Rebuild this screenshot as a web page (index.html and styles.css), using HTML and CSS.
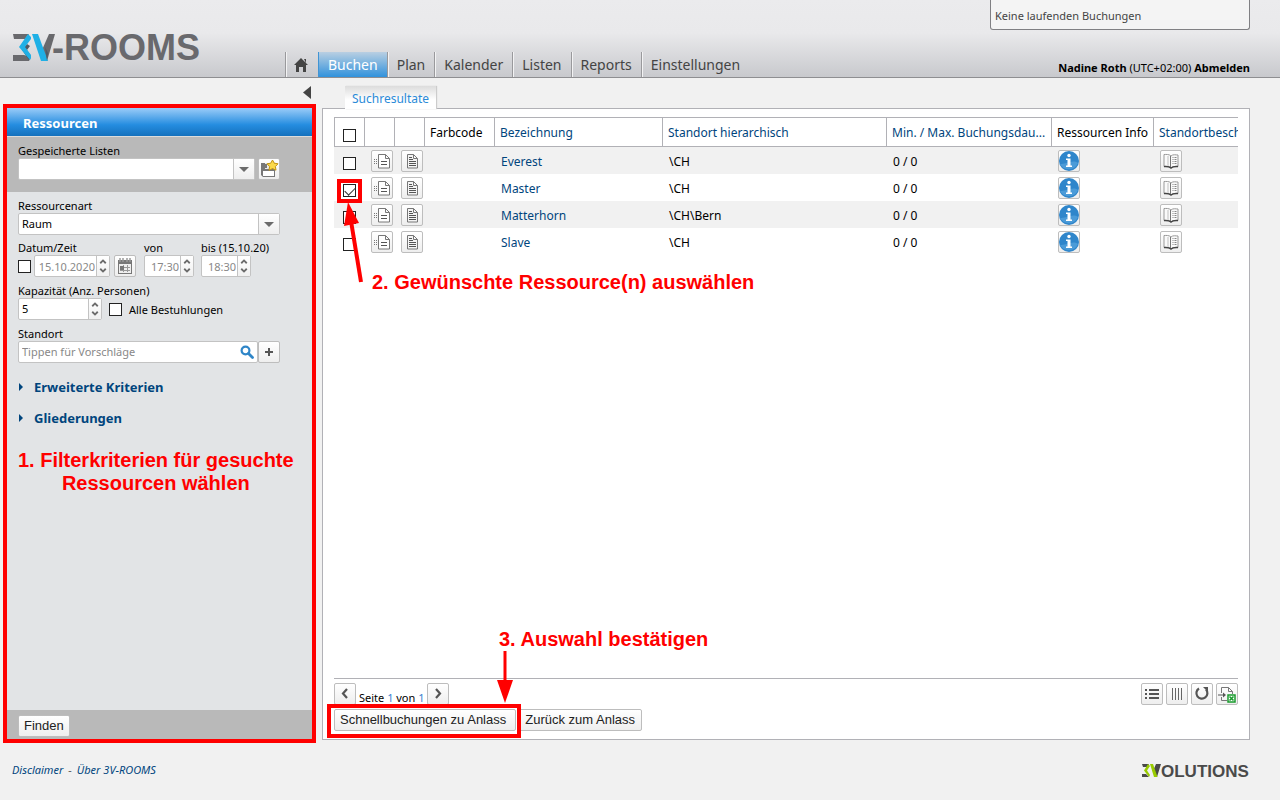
FILE: index.html
```html
<!DOCTYPE html>
<html lang="de">
<head>
<meta charset="utf-8">
<title>3V-ROOMS</title>
<link rel="stylesheet" href="styles.css">
</head>
<body>
<svg class="defs" aria-hidden="true">
  <symbol id="i-card" viewBox="0 0 20 20"><path d="M6.500 3.500h7l4 4v9.500h-11zM13.500 3.500v4h4" fill="#fff" stroke="#777"/><path d="M9 10.500h6M9 13.500h6" stroke="#555"/><path d="M2 8.500h1M4 8.500h1M2 10.500h1M4 10.500h1M2 12.500h1M4 12.500h1" stroke="#777"/></symbol>
  <symbol id="i-doc" viewBox="0 0 20 20"><path d="M5.500 3.500h6l4 4v9.500h-10zM11.500 3.500v4h4" fill="#f4f4f4" stroke="#777"/><path d="M7 6.500h3M7 8.500h4M7 10.500h7M7 12.500h7M7 14.500h7" stroke="#555"/></symbol>
  <symbol id="i-info" viewBox="1 1 20 20"><circle cx="11" cy="11" r="10" fill="#2f86cb"/><path d="M2 14a10 10 0 0 0 18-1C14 9 8 15 2 14z" fill="#4b9bd8"/><circle cx="11" cy="5.500" r="1.700" fill="#fff"/><path d="M8 8.500h4.500v7H14V17H8v-1.500h1.500V10H8z" fill="#fff"/></symbol>
  <symbol id="i-book" viewBox="0 0 20 20"><path d="M10 5c-2-2-5-1.500-7-1.500v12c2 0 5-.5 7 1.500 2-2 5-1.500 7-1.500V4c-2 0-5-1-7 1z" fill="#fafafa" stroke="#999"/><path d="M3 15.500c2 0 5-.5 7 1.500 2-2 5-1.500 7-1.500" fill="none" stroke="#444" stroke-width="1.500"/><path d="M9.500 5v11" stroke="#777"/><path d="M7 5v10" stroke="#ddd" stroke-width="2"/><path d="M11.500 6.500h1M13.500 6.500h2M11.500 8.500h1M13.500 8.500h2M11.500 10.500h1M13.500 10.500h2M11.500 12.500h1M13.500 12.500h2" stroke="#888"/></symbol>
  <symbol id="i-spin" viewBox="0 0 13 20"><path d="M3.500 7L6.500 4l3 3M3.500 13l3 3 3-3" fill="none" stroke="#6b6b6b" stroke-width="2"/></symbol>
</svg>

<header class="top">
  <a class="logo" href="#" aria-label="3V-ROOMS">
    <svg width="195" height="40" viewBox="0 0 195 40">
      <path d="M1 4h16l-4 5H2zM1 25h11l7 2-2 4H1z" fill="#69696d"/>
      <path d="M10 20l5-6 3 2-3 4 4 6-2 4z" fill="#4d5a66"/>
      <path d="M37 4h6l-8 27h-2l-3-11z" fill="#69696d"/>
      <path d="M16 4l3 3v2l-6 8 6 8v3l-1 2L7 17z" fill="#1fb0e6"/>
      <path d="M20 4h6l10 27h-7z" fill="#1fb0e6"/>
      <path d="M33 17l3 6-1 8z" fill="#4d5a66"/>
      <text x="40" y="30" class="logo-text">-ROOMS</text>
    </svg>
  </a>
  <nav class="nav">
    <a href="#" class="home" aria-label="Start"><svg width="14" height="14" viewBox="0 0 14 14"><path d="M7 0l7 7h-2v7H9V9H5v5H2V7H0zM10 1h2v4z" fill="#444"/></svg></a>
    <a href="#" class="active">Buchen</a>
    <a href="#">Plan</a>
    <a href="#">Kalender</a>
    <a href="#">Listen</a>
    <a href="#">Reports</a>
    <a href="#">Einstellungen</a>
  </nav>
  <div class="account">
    <div class="bookings">Keine laufenden Buchungen</div>
    <div class="user"><b>Nadine Roth</b> (UTC+02:00) <a href="#">Abmelden</a></div>
  </div>
</header>

<main class="main">
  <aside class="side">
    <button class="collapse" aria-label="Einklappen"><svg width="8" height="13" viewBox="0 0 8 13"><path d="M8 0v13L0 6.500z" fill="#444"/></svg></button>
    <form class="filter" onsubmit="return false">
      <h2>Ressourcen</h2>
      <div class="saved">
        <label for="lists">Gespeicherte Listen</label>
        <div class="row">
          <span class="combo"><select id="lists"><option></option></select><i></i></span>
          <button class="btn icon" aria-label="Liste speichern"><svg width="20" height="20" viewBox="0 0 20 20"><path d="M2 4h14v14H4l-2-2z" fill="#777"/><path d="M6 4h7v6H6z" fill="#e8e8e8"/><path d="M4 12h11v5H4z" fill="#fff"/><path d="M7 5v4" stroke="#777" stroke-width="2"/><path d="M13.500 1l1.800 3.200 3.700.6-2.600 2.700.6 3.700-3.500-1.600-3.500 1.600.6-3.700L8 4.800l3.700-.6z" fill="#fbd94a" stroke="#c39411"/></svg></button>
        </div>
      </div>
      <div class="fields">
        <div>
          <label for="kind">Ressourcenart</label>
          <div class="row"><span class="combo"><select id="kind"><option>Raum</option></select><i></i></span></div>
        </div>
        <div class="row when">
          <div class="date">
            <label for="date">Datum/Zeit</label>
            <div class="row">
              <input type="checkbox" aria-label="Datum aktiv">
              <span class="spin dim"><input id="date" type="text" value="15.10.2020"><button aria-label="Datum ändern"><svg><use href="#i-spin"/></svg></button></span>
              <button class="btn icon cal" aria-label="Kalender"><svg width="20" height="20" viewBox="0 0 20 20"><path d="M3 4h14v14H3z" fill="#777"/><path d="M4 8h12v9H4z" fill="#eee"/><path d="M5 2v4M8 2v4M12 2v4M15 2v4" stroke="#999" stroke-width="1.500"/><path d="M5 11.500h10M5 14.500h10M8.500 9v7M12.500 9v7" stroke="#999"/><path d="M5 10h4v4H5z" fill="#777"/></svg></button>
            </div>
          </div>
          <div class="from">
            <label for="von">von</label>
            <span class="spin dim"><input id="von" type="text" value="17:30"><button aria-label="von ändern"><svg><use href="#i-spin"/></svg></button></span>
          </div>
          <div class="to">
            <label for="bis">bis (15.10.20)</label>
            <span class="spin dim"><input id="bis" type="text" value="18:30"><button aria-label="bis ändern"><svg><use href="#i-spin"/></svg></button></span>
          </div>
        </div>
        <div>
          <label for="cap">Kapazität (Anz. Personen)</label>
          <div class="row">
            <span class="spin cap"><input id="cap" type="text" value="5"><button aria-label="Kapazität ändern"><svg><use href="#i-spin"/></svg></button></span>
            <input class="all" id="all" type="checkbox"><label for="all">Alle Bestuhlungen</label>
          </div>
        </div>
        <div>
          <label for="loc">Standort</label>
          <div class="row loc">
            <span class="search"><input id="loc" type="text" placeholder="Tippen für Vorschläge"><svg width="14" height="14" viewBox="0 0 14 14"><circle cx="5.500" cy="5.500" r="3.900" fill="#fff" stroke="#2f86c8" stroke-width="2.200"/><path d="M8.500 8.500l4 4" stroke="#2f86c8" stroke-width="2.800" stroke-linecap="round"/></svg></span>
            <button class="btn icon" aria-label="Standort hinzufügen"><svg width="20" height="20" viewBox="0 0 20 20"><path d="M10 6v8M6 10h8" stroke="#555" stroke-width="2"/></svg></button>
          </div>
        </div>
        <a class="more" href="#">Erweiterte Kriterien</a>
        <a class="more" href="#">Gliederungen</a>
        <p class="note">1. Filterkriterien für gesuchte<br>Ressourcen wählen</p>
      </div>
      <div class="submit"><button class="btn">Finden</button></div>
    </form>
  </aside>

  <section class="content">
    <div class="tabs"><a href="#">Suchresultate</a></div>
    <div class="panel">
      <div class="results">
        <table>
          <colgroup><col class="c-icon"><col class="c-icon"><col class="c-icon"><col class="c-color"><col class="c-name"><col class="c-loc"><col class="c-dur"><col class="c-info"><col class="c-desc"></colgroup>
          <thead><tr>
            <th><input type="checkbox" aria-label="Alle"></th><th></th><th></th><th>Farbcode</th>
            <th><a href="#">Bezeichnung</a></th><th><a href="#">Standort hierarchisch</a></th><th><a href="#">Min. / Max. Buchungsdau...</a></th><th>Ressourcen Info</th><th><a href="#">Standortbesch</a></th>
          </tr></thead>
          <tbody>
            <tr><td><input type="checkbox" aria-label="Everest"></td><td><button class="btn icon" aria-label="Karte"><svg><use href="#i-card"/></svg></button></td><td><button class="btn icon" aria-label="Details"><svg><use href="#i-doc"/></svg></button></td><td></td><td><a href="#">Everest</a></td><td>\CH</td><td>0 / 0</td><td><button class="btn icon" aria-label="Info"><svg><use href="#i-info"/></svg></button></td><td><button class="btn icon" aria-label="Beschreibung"><svg><use href="#i-book"/></svg></button></td></tr>
            <tr><td><input type="checkbox" aria-label="Master" checked></td><td><button class="btn icon" aria-label="Karte"><svg><use href="#i-card"/></svg></button></td><td><button class="btn icon" aria-label="Details"><svg><use href="#i-doc"/></svg></button></td><td></td><td><a href="#">Master</a></td><td>\CH</td><td>0 / 0</td><td><button class="btn icon" aria-label="Info"><svg><use href="#i-info"/></svg></button></td><td><button class="btn icon" aria-label="Beschreibung"><svg><use href="#i-book"/></svg></button></td></tr>
            <tr><td><input type="checkbox" aria-label="Matterhorn"></td><td><button class="btn icon" aria-label="Karte"><svg><use href="#i-card"/></svg></button></td><td><button class="btn icon" aria-label="Details"><svg><use href="#i-doc"/></svg></button></td><td></td><td><a href="#">Matterhorn</a></td><td>\CH\Bern</td><td>0 / 0</td><td><button class="btn icon" aria-label="Info"><svg><use href="#i-info"/></svg></button></td><td><button class="btn icon" aria-label="Beschreibung"><svg><use href="#i-book"/></svg></button></td></tr>
            <tr><td><input type="checkbox" aria-label="Slave"></td><td><button class="btn icon" aria-label="Karte"><svg><use href="#i-card"/></svg></button></td><td><button class="btn icon" aria-label="Details"><svg><use href="#i-doc"/></svg></button></td><td></td><td><a href="#">Slave</a></td><td>\CH</td><td>0 / 0</td><td><button class="btn icon" aria-label="Info"><svg><use href="#i-info"/></svg></button></td><td><button class="btn icon" aria-label="Beschreibung"><svg><use href="#i-book"/></svg></button></td></tr>
          </tbody>
        </table>
      </div>
      <div class="pager">
        <button class="btn icon" aria-label="Zurück"><svg viewBox="0 0 20 20"><path d="M12 5l-4 4.500 4 4.500" fill="none" stroke="#555" stroke-width="2.200"/></svg></button>
        <span class="page">Seite <em>1</em> von <em>1</em></span>
        <button class="btn icon" aria-label="Weiter"><svg viewBox="0 0 20 20"><path d="M8 5l4 4.500L8 14" fill="none" stroke="#555" stroke-width="2.200"/></svg></button>
        <div class="tools">
          <button class="btn icon" aria-label="Liste"><svg viewBox="0 0 20 20"><path d="M3 6h2M3 10h2M3 14h2M7 6h10M7 10h10M7 14h10" stroke="#555" stroke-width="2"/></svg></button>
          <button class="btn icon" aria-label="Spalten"><svg viewBox="0 0 20 20"><path d="M5.500 4v12M8.500 4v12M11.500 4v12M14.500 4v12" stroke="#666"/></svg></button>
          <button class="btn icon" aria-label="Neu laden"><svg viewBox="0 0 20 20"><path d="M7 4.500a5.500 5.500 0 1 0 7 1" fill="none" stroke="#555" stroke-width="2.200"/><path d="M11 3h5v5z" fill="#555"/></svg></button>
          <button class="btn icon" aria-label="Excel-Export"><svg viewBox="0 0 20 20"><path d="M4.500 9V3.500h7l4 4V10M4.500 13v3.500H10M11.500 3.500v4h4" fill="none" stroke="#777"/><path d="M1 11h6" stroke="#555"/><path d="M6 8.500L9 11l-3 2.500z" fill="#555"/><path d="M11 11h7v7h-7z" fill="#fff" stroke="#199a2d" stroke-width="1.500"/><path d="M12.500 12.500l4 4M16.500 12.500l-4 4" stroke="#199a2d" stroke-width="1.600"/></svg></button>
        </div>
      </div>
      <div class="actions"><button class="btn">Schnellbuchungen zu Anlass</button><button class="btn">Zurück zum Anlass</button></div>

      <span class="frame frame-check"></span>
      <svg class="arrow-check" width="28" height="86" viewBox="0 0 28 86"><path d="M19 81L9 20" stroke="#f00" stroke-width="4"/><path d="M6 1l11 21-15 3z" fill="#f00"/></svg>
      <p class="note note-check">2. Gewünschte Ressource(n) auswählen</p>
      <p class="note note-confirm">3. Auswahl bestätigen</p>
      <svg class="arrow-confirm" width="16" height="52" viewBox="0 0 16 52"><path d="M8 0v32" stroke="#f00" stroke-width="3"/><path d="M0 29h16L8 52z" fill="#f00"/></svg>
      <span class="frame frame-confirm"></span>
    </div>
  </section>
</main>

<footer class="foot">
  <div><a href="#">Disclaimer</a><span>-</span><a href="#">Über 3V-ROOMS</a></div>
  <a href="#" aria-label="3VOLUTIONS">
    <svg width="110" height="20" viewBox="0 0 110 20"><path d="M2 2h7L7 5H3zM2 12h4l3 3H2zM16 2h5l-4 13h-2l-2-6z" fill="#4a4a4a"/><path d="M8 2l2 2-3 4.500L10 13l-1 2-5-6.500z" fill="#9c0"/><path d="M10 2h3l4.500 13H14z" fill="#9c0"/><text x="21" y="15" class="vol-text">OLUTIONS</text></svg>
  </a>
</footer>
</body>
</html>
```
FILE: styles.css
```css
* { box-sizing: border-box; }
body {
  margin: 0;
  min-height: 100vh;
  display: flex;
  flex-direction: column;
  background: #f1f1f1;
  color: #000;
  font: 12px/15px "Noto Sans", sans-serif;
}
a { color: #00457d; text-decoration: none; }
button, input, select { font: inherit; color: inherit; margin: 0; }
.defs { display: none; }

.top {
  display: flex;
  height: 78px;
  padding: 0 30px 0 12px;
  border-bottom: 1px solid #8e8e91;
  background: linear-gradient(#ebebed, #e9e9eb 33px, #c8c9cd);
}
.logo { width: 273px; padding-top: 30px; }
.logo-text { font: bold 36px "Liberation Sans", sans-serif; fill: #69696d; }
.nav { display: flex; align-items: flex-end; flex: 1; }
.nav a {
  height: 25px;
  padding: 0 9px;
  border-left: 1px solid #99999c;
  box-shadow: inset 1px 0 #f3f3f4;
  color: #444;
  font-size: 14px;
  line-height: 26px;
}
.nav .home { width: 33px; padding: 6px 8px; line-height: 0; }
.nav .active { color: #fff; border-color: #4094d4; box-shadow: none; background: linear-gradient(#b9cfe2, #3192dc); }
.account { width: 260px; display: flex; flex-direction: column; justify-content: space-between; }
.bookings {
  height: 30px;
  padding: 8px 4px;
  border: 1px solid #808083;
  border-top: 0;
  border-radius: 0 0 3px 3px;
  background: #f4f4f4;
  color: #444;
  font-size: 11px;
}
.user { padding-bottom: 2px; text-align: right; font-size: 11px; white-space: nowrap; }
.user a { color: #000; font-weight: bold; }

.main { flex: 1; display: flex; gap: 6px; padding: 0 30px 0 3px; }
.side { width: 313px; display: flex; flex-direction: column; }
.collapse { display: flex; align-items: flex-start; align-self: flex-end; height: 26px; padding: 8px 5px 0 0; border: 0; background: none; }
.filter {
  flex: 1;
  display: flex;
  flex-direction: column;
  border: 4px solid #f00;
  background: #e2e4e6;
  font-size: 11px;
}
.filter h2 {
  margin: 0;
  height: 29px;
  padding: 0 16px;
  border-bottom: 1px solid #dcdcdc;
  background: linear-gradient(#9bccf8, #258de0 60%, #1471bd);
  color: #fff;
  font-size: 13px;
  line-height: 31px;
}
.filter label { display: block; white-space: nowrap; }
.saved { padding: 6px 32px 12px 11px; background: #b9b9b9; }
.saved .row { gap: 3px; }
.row { display: flex; align-items: center; }
.fields { flex: 1; display: flex; flex-direction: column; gap: 6px; padding: 6px 32px 0 11px; }
.combo { position: relative; flex: 1; height: 22px; }
.combo select {
  appearance: none;
  width: 100%;
  height: 22px;
  padding: 0 3px 1px;
  border: 1px solid #c3c3c3;
  border-radius: 2px;
  background: #fff;
}
.combo i {
  position: absolute;
  top: 1px; right: 1px; bottom: 1px;
  width: 21px;
  border-left: 1px solid #c3c3c3;
  background: linear-gradient(#fff, #eee);
  pointer-events: none;
}
.combo i::after {
  content: "";
  position: absolute;
  top: 8px; left: 5px;
  border: 5px solid transparent;
  border-top-color: #6b6b6b;
  border-bottom: 0;
}
.btn {
  height: 22px;
  padding: 0 5px;
  border: 1px solid #bdbdbd;
  border-radius: 2px;
  background: linear-gradient(#fff, #eee);
  color: #222;
  font: 13px/20px "Liberation Sans", sans-serif;
  white-space: nowrap;
}
.btn.icon { width: 22px; padding: 0; flex: none; line-height: 0; }
.btn.icon svg { display: block; width: 20px; height: 20px; }
input[type=checkbox] {
  appearance: none;
  flex: none;
  width: 13px;
  height: 13px;
  border: 1px solid #222;
  background: #fff;
  display: inline-block;
}
input[type=checkbox]:checked::after {
  content: "";
  display: block;
  width: 9px;
  height: 5px;
  margin: 2px 1px;
  border: solid #333;
  border-width: 0 0 1px 1px;
  transform: rotate(-45deg);
}
.spin {
  display: flex;
  height: 22px;
  border: 1px solid #c3c3c3;
  border-radius: 2px;
  background: #fff;
  width: 50px;
}
.spin input { flex: 1; min-width: 0; width: 0; border: 0; padding: 0 3px 1px; background: none; }
.spin button { width: 13px; padding: 0; border: 0; border-left: 1px solid #c3c3c3; background: linear-gradient(#fff, #f0f0f0); line-height: 0; }
.spin svg { width: 12px; height: 20px; }
.dim input { color: #888; text-align: right; padding: 0 1px; }
.date .spin { width: 76px; margin-left: 3px; }
.when { margin-top: -1px; }
.cal { margin-left: 4px; }
.from { margin-left: 8px; }
.to { margin-left: 7px; width: 50px; }
.spin.cap { width: 84px; }
.all { margin: 0 7px; }
.search {
  flex: 1;
  display: flex;
  align-items: center;
  height: 22px;
  padding: 0 3px;
  border: 1px solid #c3c3c3;
  border-radius: 2px;
  background: #fff;
}
.search input { flex: 1; min-width: 0; padding: 0 0 1px; border: 0; outline: 0; }
.search input::placeholder { color: #888; opacity: 1; }
.more { display: block; height: 25px; padding-left: 16px; font-size: 13px; font-weight: bold; line-height: 25px; }
.more:first-of-type { margin-top: 6px; }
.more::before {
  content: "";
  float: left;
  margin: 8px 0 0 -15px;
  border: 4px solid transparent;
  border-left-color: #00457d;
  border-right: 0;
}
.note { margin: 0; color: #f00; font: bold 20px/23px "Liberation Sans", sans-serif; white-space: nowrap; }
.fields .note { margin-top: 12px; text-align: center; align-self: flex-start; }
.submit { height: 29px; padding: 5px 11px 0; background: #b9b9b9; }

.content { flex: 1; min-width: 0; display: flex; flex-direction: column; padding: 8px 0 3px; }
.tabs { display: flex; padding-left: 23px; height: 22px; }
.tabs a {
  position: relative;
  z-index: 1;
  height: 23px;
  padding: 0 7px;
  background: linear-gradient(#dcdcdc, #fff 60%);
  box-shadow: 1px 0 1px #ccc;
  color: #2a8ad8;
  line-height: 25px;
}
.panel {
  position: relative;
  flex: 1;
  display: flex;
  flex-direction: column;
  padding: 8px 11px;
  border: 1px solid #b1b1b6;
  background: #fff;
}
.results { flex: 1; overflow: hidden; border-bottom: 1px solid #b1b1b6; }
table { width: 100%; min-width: 820px; table-layout: fixed; border-collapse: separate; border-spacing: 0; }
.c-icon { width: 30px; }
.c-icon:first-child { width: 31px; }
.c-color { width: 70px; }
.c-name { width: 168px; }
.c-loc { width: 224px; }
.c-dur { width: 165px; }
.c-info { width: 102px; }
th {
  height: 30px;
  padding: 0 0 0 5px;
  border: solid #b1b1b6;
  border-width: 1px 1px 1px 0;
  text-align: left;
  font-weight: normal;
  white-space: nowrap;
  overflow: hidden;
}
th:first-child { border-left-width: 1px; }
th:last-child { border-right: 0; }
td { height: 27px; padding: 2px 0 0 6px; }
tbody tr:nth-child(odd) { background: #f1f1f1; }
th input, td input { vertical-align: middle; margin: 4px 0 0 3px; }
th input { margin-top: 6px; }
td:first-child { padding-left: 6px; }
td .btn { display: block; margin-top: -2px; }
.pager { display: flex; height: 30px; padding-top: 4px; }
.page { padding: 7px 3px 0; font-size: 11px; }
.page em { color: #3b7fd0; font-style: normal; }
.tools { display: flex; gap: 3px; margin-left: auto; }
.actions { display: flex; gap: 3px; }
.actions .btn { padding: 0 6px 0 5px; }
.actions .btn:first-child { padding-right: 9px; }

.frame { position: absolute; border: 4px solid #f00; pointer-events: none; }
.frame-check { left: 14px; top: 70px; width: 25px; height: 24px; }
.arrow-check { position: absolute; left: 19px; top: 92px; }
.note-check { position: absolute; left: 49px; top: 162px; }
.note-confirm { position: absolute; left: 176px; bottom: 88px; }
.arrow-confirm { position: absolute; left: 174px; bottom: 36px; }
.frame-confirm { left: 4px; bottom: 1px; width: 194px; height: 34px; }

.foot {
  display: flex;
  justify-content: space-between;
  height: 57px;
  padding: 19px 30px 0 12px;
  font-size: 11px;
  font-style: italic;
}
.foot span { margin: 0 5px; color: #666; }
.vol-text { font: bold 17px "Liberation Sans", sans-serif; fill: #4a4a4a; }
```
